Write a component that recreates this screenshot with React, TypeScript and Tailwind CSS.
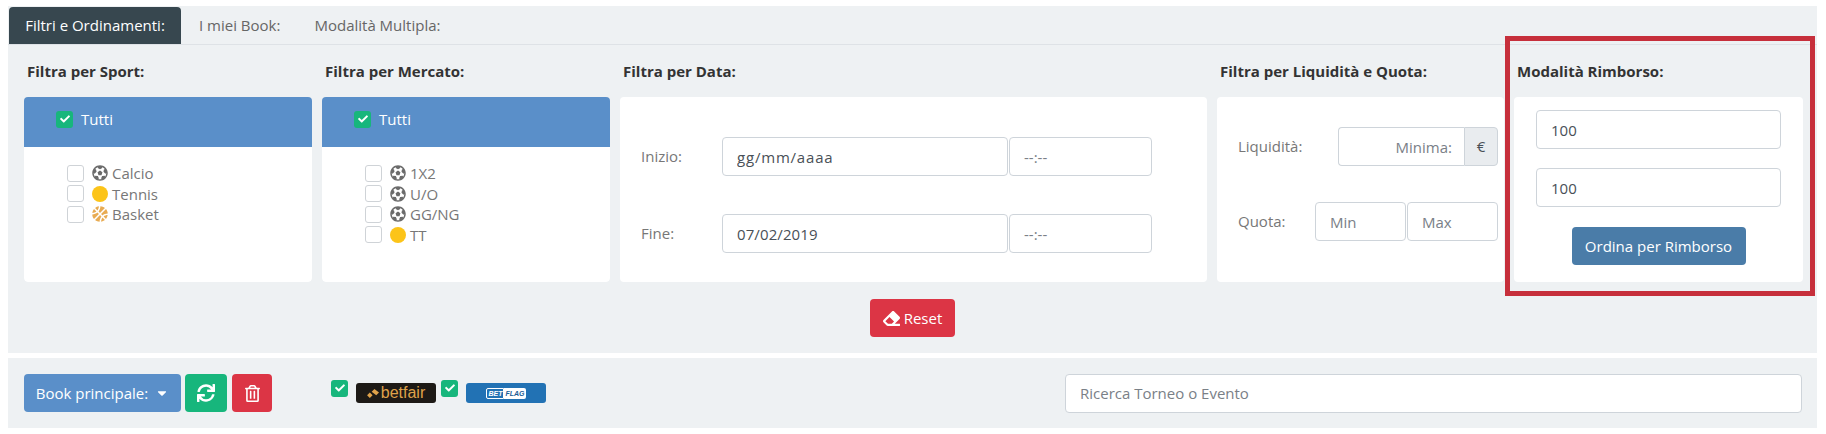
import type { ReactNode } from 'react'
import { FaCheck, FaFutbol, FaBasketballBall, FaEraser, FaSync, FaRegTrashAlt, FaCaretDown } from 'react-icons/fa'

const inputClass =
  'h-[39px] rounded border border-[#ced4da] bg-white px-[14px] text-[15px] text-[#495057] placeholder:text-[#7a8087] outline-none min-w-0'

function Tick({ className = '' }: { className?: string }) {
  return (
    <span className={`flex h-[17px] w-[17px] shrink-0 items-center justify-center rounded-[3px] bg-[#17b67c] text-white ${className}`}>
      <FaCheck className="text-[10px]" />
    </span>
  )
}

function Ball({ type }: { type: string }) {
  if (type === 'tennis') return <span className="h-[16px] w-[16px] shrink-0 rounded-full bg-[#fcc419]" />
  if (type === 'basket') return <FaBasketballBall className="h-[16px] w-[16px] shrink-0 text-[#e8ab52]" />
  return <FaFutbol className="h-[16px] w-[16px] shrink-0 text-[#6b6b6b]" />
}

function CheckList({ items }: { items: { label: string; type: string }[] }) {
  return (
    <div className="flex h-[135px] flex-col rounded-b bg-white pl-[43px] pt-[16px]">
      {items.map((item) => (
        <div key={item.label} className="flex h-[20.5px] items-center text-[15px] text-[#777]">
          <span className="h-[17px] w-[17px] shrink-0 rounded-[3px] border border-[#cfd3d7] bg-white" />
          <span className="ml-[8px] mr-[4px] flex">
            <Ball type={item.type} />
          </span>
          {item.label}
        </div>
      ))}
    </div>
  )
}

function Column({ title, width, children }: { title: string; width: string; children: ReactNode }) {
  return (
    <div className={`shrink-0 ${width}`}>
      <div className="flex h-[52px] items-center pl-[3px] text-[15px] font-bold text-[#333]">{title}</div>
      {children}
    </div>
  )
}

function TuttiCard({ items }: { items: { label: string; type: string }[] }) {
  return (
    <div className="overflow-hidden rounded">
      <div className="flex h-[50px] items-center gap-[8px] bg-[#5a8fc9] pl-[32px] pb-[6px] text-[15px] text-white">
        <Tick />
        Tutti
      </div>
      <CheckList items={items} />
    </div>
  )
}

export default function App() {
  return (
    <div className="h-[434px] bg-white pl-[8px] pr-[9px] pt-[6px] font-['Open_Sans',sans-serif]">
      <section className="relative h-[347px] bg-[#eef1f3]">
        <div className="flex h-[39px] items-end border-b border-[#dee2e6] pl-px text-[15px] text-[#666]">
          <div className="flex h-[37px] w-[172px] items-center justify-center rounded-t bg-[#37474f] text-white">Filtri e Ordinamenti:</div>
          <div className="flex h-[37px] items-center pl-[18px]">I miei Book:</div>
          <div className="flex h-[37px] items-center pl-[34px]">Modalità Multipla:</div>
        </div>

        <div className="flex gap-[10px] pl-[16px]">
          <Column title="Filtra per Sport:" width="w-[288px]">
            <TuttiCard
              items={[
                { label: 'Calcio', type: 'ball' },
                { label: 'Tennis', type: 'tennis' },
                { label: 'Basket', type: 'basket' },
              ]}
            />
          </Column>
          <Column title="Filtra per Mercato:" width="w-[288px]">
            <TuttiCard
              items={[
                { label: '1X2', type: 'ball' },
                { label: 'U/O', type: 'ball' },
                { label: 'GG/NG', type: 'ball' },
                { label: 'TT', type: 'tennis' },
              ]}
            />
          </Column>

          <Column title="Filtra per Data:" width="w-[587px]">
            <div className="flex h-[185px] flex-col gap-[38px] rounded bg-white pl-[21px] pt-[40px]">
              <div className="flex items-center text-[15px] text-[#777]">
                <span className="w-[81px]">Inizio:</span>
                <input className={`${inputClass} w-[286px] tracking-[0.8px]`} defaultValue="gg/mm/aaaa" />
                <input className={`${inputClass} ml-[1px] w-[143px]`} placeholder="--:--" />
              </div>
              <div className="flex items-center text-[15px] text-[#777]">
                <span className="w-[81px]">Fine:</span>
                <input className={`${inputClass} w-[286px] tracking-[0.1px]`} defaultValue="07/02/2019" />
                <input className={`${inputClass} ml-[1px] w-[143px]`} placeholder="--:--" />
              </div>
            </div>
          </Column>

          <Column title="Filtra per Liquidità e Quota:" width="w-[287px]">
            <div className="flex h-[185px] flex-col gap-[36px] rounded bg-white pl-[21px] pt-[30px]">
              <div className="flex items-center text-[15px] text-[#777]">
                <span className="w-[100px]">Liquidità:</span>
                <input className={`${inputClass} w-[126px] rounded-r-none border-r-0 pr-[12px] text-right`} placeholder="Minima:" />
                <span className="flex h-[39px] w-[34px] items-center justify-center rounded-r border border-[#ced4da] bg-[#e9ecef] text-[#495057]">€</span>
              </div>
              <div className="flex items-center text-[15px] text-[#777]">
                <span className="w-[77px]">Quota:</span>
                <input className={`${inputClass} w-[91px]`} placeholder="Min" />
                <input className={`${inputClass} ml-[1px] w-[91px]`} placeholder="Max" />
              </div>
            </div>
          </Column>

          <Column title="Modalità Rimborso:" width="w-[289px]">
            <div className="flex h-[185px] flex-col items-center rounded bg-white pt-[13px]">
              <input className={`${inputClass} w-[245px]`} defaultValue="100" />
              <input className={`${inputClass} mt-[19px] w-[245px]`} defaultValue="100" />
              <button className="mt-[20px] h-[38px] w-[174px] rounded bg-[#4a7ca8] text-[15px] text-white">Ordina per Rimborso</button>
            </div>
          </Column>
        </div>

        <div className="mt-[17px] flex justify-center">
          <button className="flex h-[38px] w-[85px] items-center justify-center gap-[4px] rounded bg-[#dc3545] text-[15px] text-white">
            <FaEraser className="text-[17px]" />
            Reset
          </button>
        </div>

        <div className="absolute left-[1497px] top-[30px] h-[260px] w-[310px] border-[5px] border-[#c62f3b]" />
      </section>

      <section className="mt-[5px] flex h-[70px] items-center bg-[#eef1f3] pl-[16px] pr-[15px]">
        <button className="flex h-[38px] w-[157px] items-center justify-center gap-[7px] rounded bg-[#5a8fc9] text-[15px] text-white">
          Book principale:
          <FaCaretDown className="text-[14px]" />
        </button>
        <button className="ml-[4px] flex h-[38px] w-[42px] items-center justify-center rounded bg-[#17b67c] text-white">
          <FaSync className="text-[18px]" />
        </button>
        <button className="ml-[5px] flex h-[38px] w-[40px] items-center justify-center rounded bg-[#dc3545] text-white">
          <FaRegTrashAlt className="text-[17px]" />
        </button>

        <Tick className="mb-[10px] ml-[59px]" />
        <span className="ml-[8px] flex h-[20px] w-[80px] items-center justify-center gap-[1px] rounded-[3px] bg-[#1d1a16] font-['Liberation_Sans',sans-serif] text-[16px] leading-none text-[#dfa24a]">
          <svg viewBox="0 0 14 12" className="h-[11px] w-[13px]">
            <path d="M0 8l3-3 3 3-3 3zM5 4l3-3 5 4-3 3z" fill="#dfa24a" />
          </svg>
          betfair
        </span>
        <Tick className="mb-[10px] ml-[5px]" />
        <span className="ml-[8px] flex h-[20px] w-[80px] items-center justify-center rounded-[3px] bg-[#2272b4] font-['Liberation_Sans',sans-serif] text-[7px] font-bold italic leading-none">
          <span className="rounded-l-[2px] border border-white px-[1px] py-[1px] text-white">BET</span>
          <span className="rounded-r-[2px] bg-white px-[1px] py-[2px] text-[#1c5d96]">FLAG</span>
        </span>

        <input className={`${inputClass} ml-auto h-[38px] w-[737px]`} placeholder="Ricerca Torneo o Evento" />
      </section>
    </div>
  )
}
